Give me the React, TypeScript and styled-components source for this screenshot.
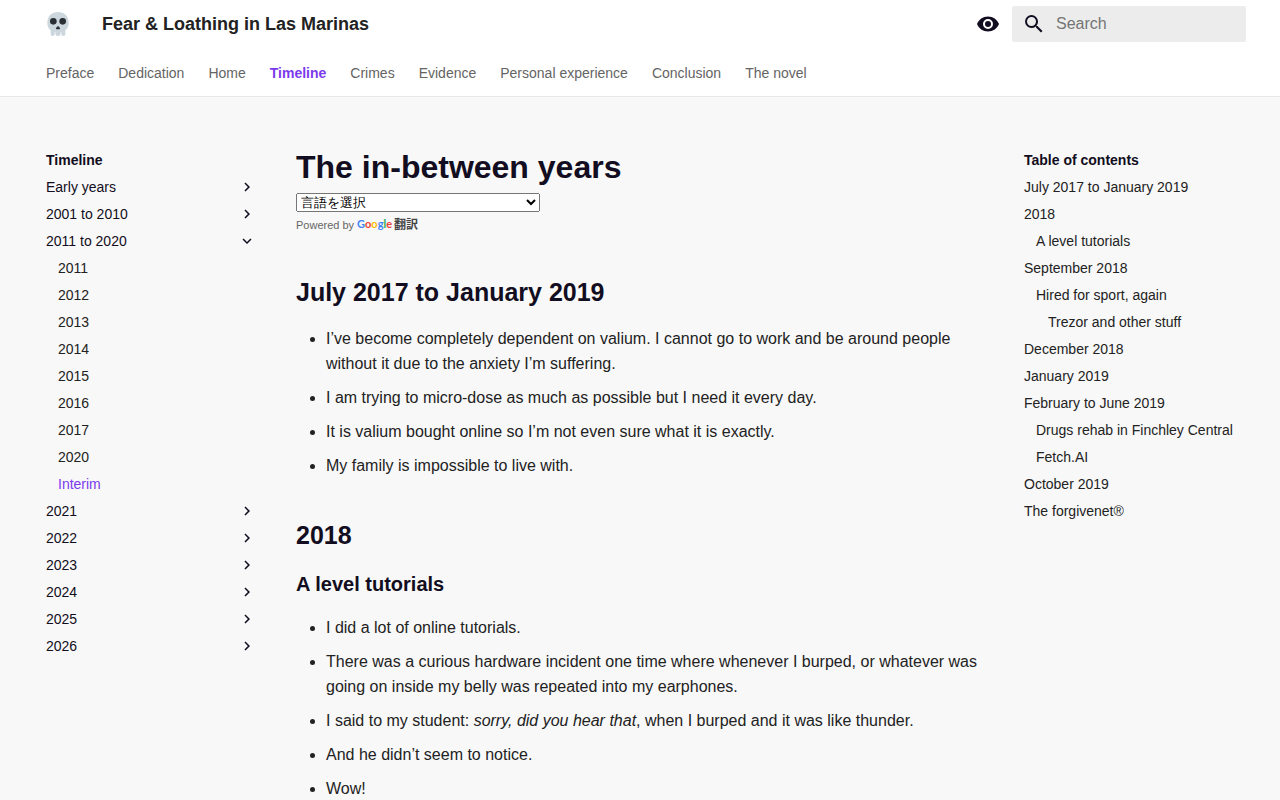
import React from "react";
import styled, { createGlobalStyle } from "styled-components";

const ink = "#120d20";
const text = "#222222";
const accent = "#7c3aed";

const GlobalStyle = createGlobalStyle`
  *, *::before, *::after { box-sizing: border-box; }
  body {
    margin: 0;
    background: #f8f8f8;
    color: ${text};
    font-family: "Liberation Sans", "Noto Sans CJK JP", sans-serif;
    font-size: 16px;
    line-height: 25px;
  }
  a { color: inherit; text-decoration: none; }
  button, input { font: inherit; color: inherit; }
`;

const Grid = styled.div`
  max-width: 1220px;
  margin: 0 auto;
`;

const Header = styled.header`
  background: #ffffff;
  border-bottom: 1px solid #e8e8e8;
`;

const TopBar = styled(Grid)`
  display: flex;
  align-items: center;
  height: 48px;
  padding: 0 4px 0 16px;
`;

const Logo = styled.a`
  display: flex;
  margin-right: 32px;
`;

const SiteTitle = styled.span`
  flex: 1;
  font-size: 18px;
  font-weight: 700;
`;

const IconButton = styled.button`
  display: flex;
  margin-right: 12px;
  padding: 0;
  border: 0;
  background: none;
  color: ${ink};
  cursor: pointer;
`;

const SearchBox = styled.label`
  display: flex;
  align-items: center;
  gap: 10px;
  width: 234px;
  height: 36px;
  padding: 0 10px;
  border-radius: 2px;
  background: #ececec;
  color: ${ink};

  svg { flex: none; }
`;

const SearchInput = styled.input`
  flex: 1;
  min-width: 0;
  height: 36px;
  padding: 0;
  border: 0;
  outline: 0;
  background: none;

  &::placeholder { color: #757575; }
`;

const Tabs = styled(Grid).attrs({ as: "nav" })`
  display: flex;
  align-items: center;
  gap: 24px;
  height: 48px;
  padding: 2px 16px 0;
  font-size: 14px;
`;

const Tab = styled.a<{ $active?: boolean }>`
  color: ${(p) => (p.$active ? accent : "#646464")};
  font-weight: ${(p) => (p.$active ? 700 : 400)};
  white-space: nowrap;
`;

const Columns = styled(Grid)`
  display: grid;
  grid-template-columns: 242px minmax(0, 1fr) 242px;
`;

const Sidebar = styled.nav`
  display: flex;
  flex-direction: column;
  gap: 9px;
  padding: 54px 16px 24px;
  font-size: 14px;
  line-height: 18px;
`;

const SidebarTitle = styled.div`
  color: ${ink};
  font-weight: 700;
`;

const Section = styled.button`
  display: flex;
  align-items: center;
  justify-content: space-between;
  padding: 0;
  border: 0;
  background: none;
  color: ${ink};
  text-align: left;
  cursor: pointer;
`;

const SideLink = styled.a<{ $depth: number; $active?: boolean }>`
  padding-left: ${(p) => p.$depth * 12}px;
  color: ${(p) => (p.$active ? accent : text)};
`;

const Article = styled.article`
  padding: 49px 24px 0;
`;

const H1 = styled.h1`
  margin: 0 0 5px;
  color: ${ink};
  font-size: 32px;
  line-height: 42px;
`;

const H2 = styled.h2`
  margin: 40px 0 16px;
  color: ${ink};
  font-size: 25px;
  line-height: 35px;
`;

const H3 = styled.h3`
  margin: 16px 0;
  color: ${ink};
  font-size: 20px;
  line-height: 30px;
`;

const List = styled.ul`
  display: flex;
  flex-direction: column;
  gap: 9px;
  margin: 0;
  padding-left: 30px;
`;

const Translate = styled.div`
  display: flex;
  flex-direction: column;
  align-items: flex-start;
  gap: 3px;
  color: #666666;
  font-size: 11px;
  line-height: 20px;
`;

const LanguageSelect = styled.select`
  width: 244px;
  height: 19px;
`;

const Powered = styled.div`
  display: flex;
  align-items: center;
  gap: 3px;
`;

const TranslateLink = styled.a`
  display: flex;
  gap: 2px;
  color: #444444;
  font-size: 12px;
  font-weight: 700;
`;

const Wordmark = styled.span`
  font-family: Lato, sans-serif;
  font-size: 11px;
  line-height: 18px;
`;

const Letter = styled.span<{ $color: string }>`
  color: ${(p) => p.$color};
`;

const Skull = () => (
  <svg width="24" height="24" viewBox="0 0 36 36" aria-hidden="true">
    <path
      fill="#ccd6dd"
      d="M34 16C34 6 26.8 0 18 0S2 6 2 16c0 5 1.8 9.2 5 11.5V33c0 1.7 1.3 3 3 3s3-1.3 3-3v-2.500h1.200V33c0 1.700 1.600 3 3.300 3h1c1.700 0 3.300-1.300 3.300-3v-2.500H23V33c0 1.700 1.300 3 3 3s3-1.300 3-3v-5.500C32.200 25.200 34 21 34 16z"
    />
    <circle cx="11" cy="14" r="5" fill="#292f33" />
    <circle cx="25" cy="14" r="5" fill="#292f33" />
    <path fill="#292f33" d="M18 21.5c-1.5 0-3 2.5-3 3.5s1.5 1 3 1 3 0 3-1-1.500-3.500-3-3.500z" />
  </svg>
);

const Icon = ({ d, size = 24, turn = 0 }: { d: string; size?: number; turn?: number }) => (
  <svg width={size} height={size} viewBox="0 0 24 24" fill="currentColor" aria-hidden="true">
    <path d={d} transform={`rotate(${turn} 12 12)`} />
  </svg>
);

const eyePath =
  "M12 9a3 3 0 0 0-3 3 3 3 0 0 0 3 3 3 3 0 0 0 3-3 3 3 0 0 0-3-3m0 8a5 5 0 0 1-5-5 5 5 0 0 1 5-5 5 5 0 0 1 5 5 5 5 0 0 1-5 5m0-12.5C7 4.5 2.73 7.61 1 12c1.73 4.39 6 7.5 11 7.5s9.27-3.11 11-7.5c-1.73-4.39-6-7.5-11-7.5z";
const searchPath =
  "M9.5 3A6.5 6.5 0 0 1 16 9.5c0 1.61-.59 3.09-1.56 4.23l.27.27h.79l5 5-1.5 1.5-5-5v-.79l-.27-.27A6.516 6.516 0 0 1 9.5 16 6.5 6.5 0 0 1 3 9.5 6.5 6.5 0 0 1 9.5 3m0 2C7 5 5 7 5 9.5S7 14 9.5 14 14 12 14 9.5 12 5 9.5 5z";
const chevronPath = "M8.59 16.58 13.17 12 8.59 7.41 10 6l6 6-6 6z";

const tabs = [
  "Preface",
  "Dedication",
  "Home",
  "Timeline",
  "Crimes",
  "Evidence",
  "Personal experience",
  "Conclusion",
  "The novel",
];

const sections: { label: string; children?: string[] }[] = [
  { label: "Early years" },
  { label: "2001 to 2010" },
  {
    label: "2011 to 2020",
    children: ["2011", "2012", "2013", "2014", "2015", "2016", "2017", "2020", "Interim"],
  },
  { label: "2021" },
  { label: "2022" },
  { label: "2023" },
  { label: "2024" },
  { label: "2025" },
  { label: "2026" },
];

const contents: [string, number][] = [
  ["July 2017 to January 2019", 0],
  ["2018", 0],
  ["A level tutorials", 1],
  ["September 2018", 0],
  ["Hired for sport, again", 1],
  ["Trezor and other stuff", 2],
  ["December 2018", 0],
  ["January 2019", 0],
  ["February to June 2019", 0],
  ["Drugs rehab in Finchley Central", 1],
  ["Fetch.AI", 1],
  ["October 2019", 0],
  ["The forgivenet®", 0],
];

const wordmark: [string, string][] = [
  ["G", "#4285f4"],
  ["o", "#ea4335"],
  ["o", "#fbbc05"],
  ["g", "#4285f4"],
  ["l", "#34a853"],
  ["e", "#ea4335"],
];

export default function App() {
  return (
    <>
      <GlobalStyle />
      <Header>
        <TopBar>
          <Logo href="#" aria-label="Home page">
            <Skull />
          </Logo>
          <SiteTitle>Fear &amp; Loathing in Las Marinas</SiteTitle>
          <IconButton type="button" aria-label="Switch theme">
            <Icon d={eyePath} />
          </IconButton>
          <SearchBox>
            <Icon d={searchPath} />
            <SearchInput type="text" placeholder="Search" aria-label="Search" />
          </SearchBox>
        </TopBar>
        <Tabs>
          {tabs.map((t) => (
            <Tab key={t} href="#" $active={t === "Timeline"}>
              {t}
            </Tab>
          ))}
        </Tabs>
      </Header>
      <Columns>
        <Sidebar aria-label="Timeline">
          <SidebarTitle>Timeline</SidebarTitle>
          {sections.map((s) => (
            <React.Fragment key={s.label}>
              <Section type="button" aria-expanded={!!s.children}>
                {s.label}
                <Icon d={chevronPath} size={18} turn={s.children ? 90 : 0} />
              </Section>
              {s.children?.map((c) => (
                <SideLink key={c} href="#" $depth={1} $active={c === "Interim"}>
                  {c}
                </SideLink>
              ))}
            </React.Fragment>
          ))}
        </Sidebar>
        <Article>
          <H1>The in-between years</H1>
          <Translate>
            <LanguageSelect aria-label="言語を選択">
              <option>言語を選択</option>
            </LanguageSelect>
            <Powered>
              Powered by
              <TranslateLink href="#">
                <Wordmark>
                  {wordmark.map(([ch, color], i) => (
                    <Letter key={i} $color={color}>
                      {ch}
                    </Letter>
                  ))}
                </Wordmark>
                翻訳
              </TranslateLink>
            </Powered>
          </Translate>
          <H2>July 2017 to January 2019</H2>
          <List>
            <li>
              I’ve become completely dependent on valium. I cannot go to work and be around people
              without it due to the anxiety I’m suffering.
            </li>
            <li>I am trying to micro-dose as much as possible but I need it every day.</li>
            <li>It is valium bought online so I’m not even sure what it is exactly.</li>
            <li>My family is impossible to live with.</li>
          </List>
          <H2>2018</H2>
          <H3>A level tutorials</H3>
          <List>
            <li>I did a lot of online tutorials.</li>
            <li>
              There was a curious hardware incident one time where whenever I burped, or whatever
              was going on inside my belly was repeated into my earphones.
            </li>
            <li>
              I said to my student: <em>sorry, did you hear that</em>, when I burped and it was like
              thunder.
            </li>
            <li>And he didn’t seem to notice.</li>
            <li>Wow!</li>
          </List>
        </Article>
        <Sidebar aria-label="Table of contents">
          <SidebarTitle>Table of contents</SidebarTitle>
          {contents.map(([label, depth]) => (
            <SideLink key={label} href="#" $depth={depth}>
              {label}
            </SideLink>
          ))}
        </Sidebar>
      </Columns>
    </>
  );
}
